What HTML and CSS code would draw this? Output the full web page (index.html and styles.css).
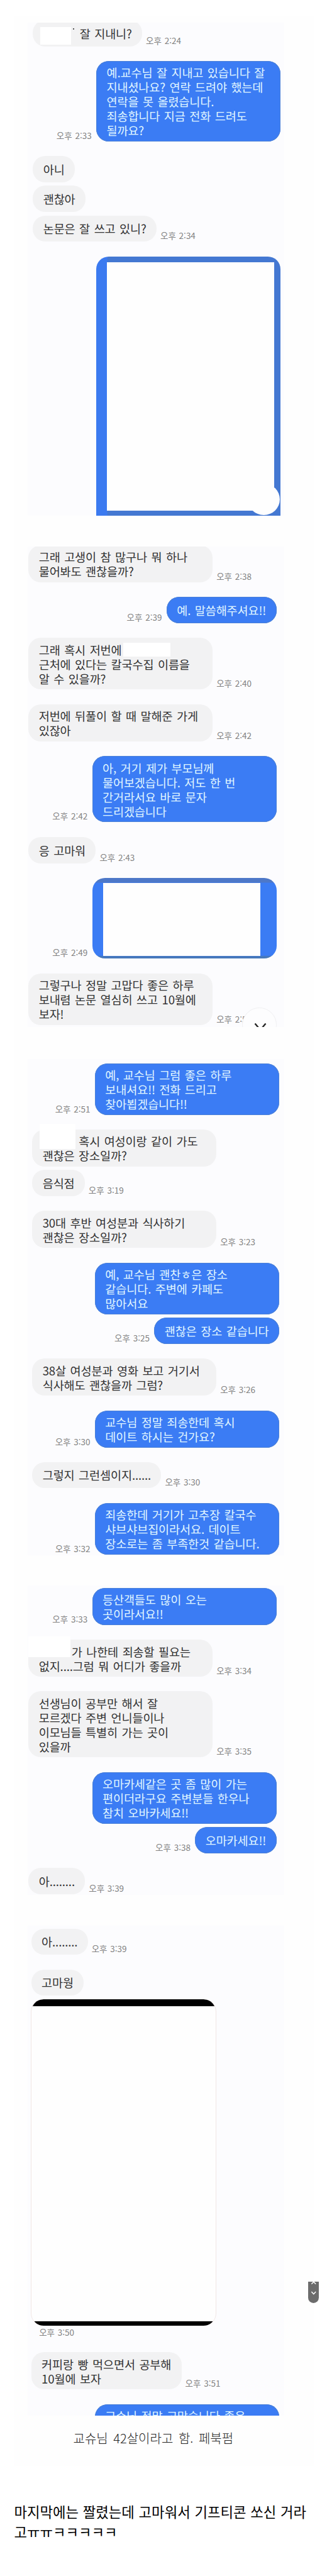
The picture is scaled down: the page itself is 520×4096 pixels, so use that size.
FILE: index.html
```html
<!DOCTYPE html>
<html lang="ko">
<head>
<meta charset="utf-8">
<title>교수님 문자</title>
<link rel="stylesheet" href="styles.css">
</head>
<body>
<main class="page">
  <article class="post-image">
    <section class="panel panel-1">
      <div class="row in"><p class="bubble"><span class="hidden-name name-1"></span>잘 지내니?<span class="mask mask-1"></span></p><time>오후 2:24</time></div>
      <div class="row out"><time>오후 2:33</time><p class="bubble wide">예.교수님 잘 지내고 있습니다 잘<br>지내셨나요? 연락 드려야 했는데<br>연락을 못 올렸습니다.<br>죄송합니다 지금 전화 드려도<br>될까요?</p></div>
      <div class="row in"><p class="bubble">아니</p></div>
      <div class="row in near"><p class="bubble">괜찮아</p></div>
      <div class="row in near"><p class="bubble">논문은 잘 쓰고 있니?</p><time>오후 2:34</time></div>
      <div class="row out"><div class="photo photo-tall"><div class="photo-body"></div><span class="photo-dot"></span></div></div>
    </section>

    <section class="panel panel-2">
      <div class="row in"><p class="bubble wide">그래 고생이 참 많구나 뭐 하나<br>물어봐도 괜찮을까?</p><time>오후 2:38</time></div>
      <div class="row out"><time>오후 2:39</time><p class="bubble">예. 말씀해주셔요!!</p></div>
      <div class="row in"><p class="bubble wide">그래 혹시 저번에<br>근처에 있다는 칼국수집 이름을<br>알 수 있을까?<span class="mask mask-2"></span></p><time>오후 2:40</time></div>
      <div class="row in"><p class="bubble wide">저번에 뒤풀이 할 때 말해준 가게<br>있잖아</p><time>오후 2:42</time></div>
      <div class="row out"><time>오후 2:42</time><p class="bubble wide">아, 거기 제가 부모님께<br>물어보겠습니다. 저도 한 번<br>간거라서요 바로 문자<br>드리겠습니다</p></div>
      <div class="row in"><p class="bubble">응 고마워</p><time>오후 2:43</time></div>
      <div class="row out"><time>오후 2:49</time><div class="photo photo-wide"><div class="photo-body"></div></div></div>
      <div class="row in"><p class="bubble wide">그렇구나 정말 고맙다 좋은 하루<br>보내렴 논문 열심히 쓰고 10월에<br>보자!</p><time>오후 2:5</time></div>
      <span class="jump"><svg viewBox="0 0 20 12" width="20" height="12"><path d="M1.5 1.5 10 11.500 18.500 1.500" fill="none" stroke="#222" stroke-width="2.300"/></svg></span>
    </section>

    <section class="panel panel-3">
      <div class="row out"><time>오후 2:51</time><p class="bubble wide">예, 교수님 그럼 좋은 하루<br>보내셔요!! 전화 드리고<br>찾아뵙겠습니다!!</p></div>
      <div class="row in"><p class="bubble wide"><span class="hidden-name name-3"></span>혹시 여성이랑 같이 가도<br>괜찮은 장소일까?<span class="mask mask-3"></span></p></div>
      <div class="row in near"><p class="bubble">음식점</p><time>오후 3:19</time></div>
      <div class="row in"><p class="bubble wide">30대 후반 여성분과 식사하기<br>괜찮은 장소일까?</p><time>오후 3:23</time></div>
      <div class="row out"><p class="bubble wide">예, 교수님 괜찬ㅎ은 장소<br>같습니다. 주변에 카페도<br>많아서요</p></div>
      <div class="row out near"><time>오후 3:25</time><p class="bubble">괜찮은 장소 같습니다</p></div>
      <div class="row in"><p class="bubble wide">38살 여성분과 영화 보고 거기서<br>식사해도 괜찮을까 그럼?</p><time>오후 3:26</time></div>
      <div class="row out"><time>오후 3:30</time><p class="bubble wide">교수님 정말 죄송한데 혹시<br>데이트 하시는 건가요?</p></div>
      <div class="row in"><p class="bubble">그렇지 그런셈이지......</p><time>오후 3:30</time></div>
      <div class="row out"><time>오후 3:32</time><p class="bubble wide">죄송한데 거기가 고추장 칼국수<br>샤브샤브집이라서요. 데이트<br>장소로는 좀 부족한것 같습니다.</p></div>
    </section>

    <section class="panel panel-4">
      <div class="row out"><time>오후 3:33</time><p class="bubble wide">등산객들도 많이 오는<br>곳이라서요!!</p></div>
      <div class="row in"><p class="bubble wide"><span class="hidden-name name-4"></span>가 나한테 죄송할 필요는<br>없지....그럼 뭐 어디가 좋을까<span class="mask mask-4"></span></p><time>오후 3:34</time></div>
      <div class="row in"><p class="bubble wide">선생님이 공부만 해서 잘<br>모르겠다 주변 언니들이나<br>이모님들 특별히 가는 곳이<br>있을까</p><time>오후 3:35</time></div>
      <div class="row out"><p class="bubble wide">오마카세같은 곳 좀 많이 가는<br>편이더라구요 주변분들 한우나<br>참치 오바카세요!!</p></div>
      <div class="row out near"><time>오후 3:38</time><p class="bubble">오마카세요!!</p></div>
      <div class="row in"><p class="bubble">아........</p><time>오후 3:39</time></div>
    </section>

    <section class="panel panel-5">
      <div class="row in"><p class="bubble">아........</p><time>오후 3:39</time></div>
      <div class="row in"><p class="bubble">고마웡</p></div>
      <div class="gift"></div>
      <time class="gift-time">오후 3:50</time>
      <div class="row in"><p class="bubble">커피랑 빵 먹으면서 공부해<br>10월에 보자</p><time>오후 3:51</time></div>
      <div class="row out"><p class="bubble wide cropped">교수님 정말 고맙습니다 좋은</p></div>
    </section>

    <p class="caption">교슈님 42살이라고 함. 페북펌</p>
  </article>
  <p class="comment">마지막에는 짤렸는데 고마워서 기프티콘 쏘신 거라<br>고ㅠㅠㅋㅋㅋㅋㅋ</p>
  <div class="scroller"><svg viewBox="0 0 18 34" width="17.500" height="33.500"><path d="M5.500 3.700 9 0 12.500 3.700M5.500 16.200 9 20 12.500 16.200" fill="none" stroke="#fff" stroke-width="1.500"/></svg></div>
</main>
</body>
</html>
```
FILE: styles.css
```css
* { box-sizing: border-box; }
body {
  margin: 0;
  background: #fff;
  font-family: "Noto Sans CJK KR", sans-serif;
}
p { margin: 0; }

.page {
  position: relative;
  width: 520px;
  height: 4096px;
  overflow: hidden;
  padding-top: 26px;
}
.post-image {
  width: 477px;
  height: 3895px;
  margin-left: 22.5px;
  padding: 10px 0 0 21.5px;
  background: #fefefe;
}

/* Message panels */
.panel {
  --gap: 23.3px;
  position: relative;
  width: 408px;
  overflow: hidden;
  background: #fcfcfe;
}
.panel-1 { height: 784px; padding: 0 6px 0 8.400px; }
.panel-2 { --gap: 23.600px; height: 764.500px; margin-top: 48.500px; padding: 0 12.500px 0 1.400px; }
.panel-3 { height: 789.500px; margin-top: 50.500px; padding: 7px 8.200px 0 7.400px; }
.panel-4 { height: 492px; margin-top: 47.500px; padding: 4.300px 12.500px 0 1.400px; }
.panel-5 { height: 779px; margin-top: 49px; padding: 5.300px 8.500px 0 5.800px; }

.row {
  display: flex;
  align-items: flex-end;
  margin-top: var(--gap);
}
.row:first-child { margin-top: 0; }
.panel-1 .row:first-child { margin-top: -4px; }
.panel-2 .row:first-child { margin-top: -2px; }
.row.near { margin-top: 5.700px; }
.row.out { justify-content: flex-end; }

.bubble {
  position: relative;
  display: flow-root;
  flex: none;
  min-height: 41.600px;
  padding: 6.500px 16.300px;
  border-radius: 20px;
  background: #f2f2f3;
  color: #333;
  font-size: 18.600px;
  letter-spacing: -0.150px;
  line-height: 23px;
  word-spacing: 1.500px;
  white-space: nowrap;
}
.bubble:not(.cropped):not(:has(br)) { line-height: 28.600px; }
.wide { width: 292.800px; }
.out .bubble {
  background: #3b7cf4;
  box-shadow: inset 0 0 0 1px #4b80d6;
  color: #e0f6ff;
}
.bubble.cropped { height: 29.500px; min-height: 0; border-radius: 20px 20px 0 0; }

time {
  flex: none;
  color: #828282;
  font-size: 13.500px;
  line-height: 19px;
  word-spacing: 1px;
  white-space: nowrap;
}
.in time { margin-left: 6px; }
.out time { margin-right: 7.500px; }

/* Hidden names */
.hidden-name { display: inline-block; }
.name-1 { width: 58px; }
.name-3 { width: 57.500px; }
.name-4 { width: 52px; }
.mask { position: absolute; background: #fff; }
.mask-1 { left: 11.300px; top: 11.300px; width: 49px; height: 27.500px; }
.mask-1::after {
  content: "";
  position: absolute;
  left: 52px;
  top: 2px;
  width: 2px;
  height: 2px;
  background: #555;
}
.mask-2 { left: 151px; top: 7.500px; width: 75px; height: 22px; }
.mask-3 { left: 11.500px; top: -9px; width: 57px; height: 40px; }
.mask-4 { left: 0; top: -5px; width: 67px; height: 33px; }

/* Photo messages */
.photo {
  position: relative;
  width: 292.800px;
  background: #4279dc;
}
.photo-body { height: 100%; background: #fefefe; }
.photo-tall {
  height: 412.600px;
  padding: 9px 10.500px 8px 17.200px;
  border-radius: 20px 20px 0 0;
  background: linear-gradient(90deg, #3b7af0 17px, #4478d2 18px);
}
.photo-dot {
  position: absolute;
  right: 0.700px;
  bottom: 1.500px;
  width: 51px;
  height: 50px;
  border-radius: 50%;
  background: #fefefe;
}
.photo-wide {
  height: 128px;
  padding: 7.500px 25.200px 4px 17.200px;
  border-radius: 20px;
  background: linear-gradient(#4d78c8 7px, #3b7cf4 8px, #3b7cf4 123px, #4678ba 125px);
}

.jump {
  position: absolute;
  left: 341px;
  top: 733px;
  width: 55px;
  height: 55px;
  padding: 23px 0 0 17.500px;
  border: 1px solid #f0f0f2;
  border-radius: 50%;
  background: #fdfdfe;
  line-height: 0;
}

.gift {
  width: 295px;
  height: 519px;
  margin: 5.700px 0 0 -0.800px;
  border: solid #f0e6e4;
  border-width: 0 1px;
  border-radius: 20px;
  background: linear-gradient(#000 11px, #fefefe 11px, #fefefe 512px, #000 512px);
}
.gift-time { display: block; margin: 1.500px 0 0 12.400px; }
.gift-time + .row { margin-top: 22px; }

.caption {
  margin: 22px 0 0 72.500px;
  color: #262626;
  font-size: 20px;
  font-weight: 300;
  line-height: 28px;
  word-spacing: 3px;
  white-space: nowrap;
}

.comment {
  margin: 56px 0 0 22.500px;
  color: #000;
  font-size: 22.300px;
  line-height: 32px;
  word-spacing: 0.500px;
  white-space: nowrap;
}

.scroller {
  position: absolute;
  left: 489.500px;
  top: 3628.400px;
  width: 17.500px;
  height: 33.500px;
  overflow: hidden;
  border-radius: 0 0 9px 9px;
  background: #6c6c6c;
  line-height: 0;
}
```
